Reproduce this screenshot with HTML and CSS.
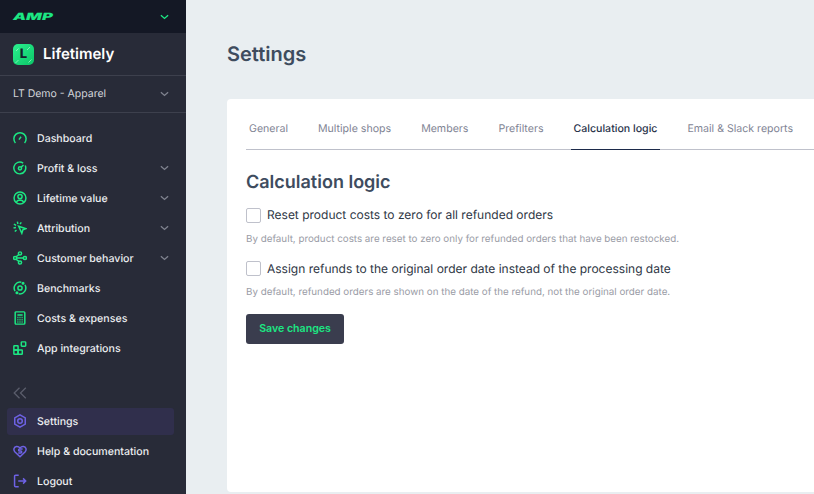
FILE: index.html
```html
<!DOCTYPE html>
<html lang="en">
<head>
    <meta charset="UTF-8">
    <meta name="viewport" content="width=device-width, initial-scale=1.0">
    <title>Lifetimely - Settings</title>
    <link rel="stylesheet" href="styles.css">
</head>
<body>
    <div class="app">
        <aside class="sidebar">
            <div class="topbar">
                <span class="amp-logo">AMP</span>
                <svg class="chev chev-green" viewBox="0 0 10 6"><path d="M1 1l4 3.600L9 1"/></svg>
            </div>
            <div class="brand">
                <span class="brand-mark">L
                    <svg class="brand-shine" viewBox="0 0 21 21"><path d="M14 6l3-3M2.500 19l3-3M15.500 18.500l3-3M3 7l2.500-2.500"/></svg>
                </span>
                <span class="brand-name">Lifetimely</span>
            </div>
            <div class="shop-select">
                <span>LT Demo - Apparel</span>
                <svg class="chev" viewBox="0 0 10 6"><path d="M1 1l4 3.600L9 1"/></svg>
            </div>

            <nav class="nav">
                <a class="nav-item">
                    <svg class="icon" viewBox="0 0 16 16"><path d="M2.800 13.600A7 7 0 1 1 13.200 13.600"/><path d="M6.800 9.800l2.400-3.200"/></svg>
                    <span>Dashboard</span>
                </a>
                <a class="nav-item">
                    <svg class="icon" viewBox="0 0 16 16"><path d="M11.600 2.300A6.800 6.800 0 1 0 14 5.200"/><circle cx="8" cy="8.400" r="1.800"/><path d="M9.400 7l2.600-2.400"/></svg>
                    <span>Profit &amp; loss</span>
                    <svg class="chev" viewBox="0 0 10 6"><path d="M1 1l4 3.600L9 1"/></svg>
                </a>
                <a class="nav-item">
                    <svg class="icon" viewBox="0 0 16 16"><circle cx="8" cy="8" r="6.800"/><circle cx="8" cy="6.400" r="2.400"/><path d="M3.900 13.200c.4-1.800 1.700-2.700 3-2.700h2.200c1.300 0 2.600.9 3 2.700"/></svg>
                    <span>Lifetime value</span>
                    <svg class="chev" viewBox="0 0 10 6"><path d="M1 1l4 3.600L9 1"/></svg>
                </a>
                <a class="nav-item">
                    <svg class="icon" viewBox="0 0 16 16"><path d="M6.500 6l8 2.800-3.200 1.300-1.200 3.900z"/><path d="M1 3.600l2.600 1.400M5 .8l.6 2.600M.6 8l2.800-.6M9.500 1.600L8 3.600M2 12l2-1.600"/></svg>
                    <span>Attribution</span>
                    <svg class="chev" viewBox="0 0 10 6"><path d="M1 1l4 3.600L9 1"/></svg>
                </a>
                <a class="nav-item">
                    <svg class="icon" viewBox="0 0 16 16"><circle cx="8" cy="2.800" r="1.800"/><circle cx="2.400" cy="8" r="1.800"/><circle cx="13.600" cy="8" r="1.800"/><circle cx="8" cy="13.200" r="1.800"/><path d="M4.200 8h7.600M6.700 4.200L3.600 6.600M3.600 9.400l3 2.500"/></svg>
                    <span>Customer behavior</span>
                    <svg class="chev" viewBox="0 0 10 6"><path d="M1 1l4 3.600L9 1"/></svg>
                </a>
                <a class="nav-item">
                    <svg class="icon" viewBox="0 0 16 16"><circle cx="8" cy="8" r="2.400"/><path d="M2.300 11.500A6.800 6.800 0 0 1 9.500 1.400M13.700 4.500A6.800 6.800 0 0 1 6.500 14.600"/><circle cx="11.500" cy="2.600" r=".9"/><circle cx="4.500" cy="13.400" r=".9"/></svg>
                    <span>Benchmarks</span>
                </a>
                <a class="nav-item">
                    <svg class="icon" viewBox="0 0 16 16"><rect x="2.500" y="1" width="11" height="14" rx="1"/><path d="M5 4.500h6M5 7.500h1.200M7.400 7.500h1.200M9.800 7.500H11M5 10h1.200M7.400 10h1.200M9.800 10H11M5 12.500h1.200M7.400 12.500h1.200M9.800 12.500H11"/></svg>
                    <span>Costs &amp; expenses</span>
                </a>
                <a class="nav-item">
                    <svg class="icon" viewBox="0 0 16 16"><rect x="1" y="5.500" width="4.800" height="4.800" rx=".6"/><rect x="1" y="10.300" width="4.800" height="4.800" rx=".6"/><rect x="5.800" y="10.300" width="4.800" height="4.800" rx=".6"/><rect x="9.500" y="1" width="5" height="5" rx=".8"/></svg>
                    <span>App integrations</span>
                </a>
            </nav>

            <div class="collapse">
                <svg viewBox="0 0 14 12"><path d="M6.500 .8L1.200 6l5.300 5.200M12.800 .8L7.500 6l5.300 5.200"/></svg>
            </div>

            <nav class="nav nav-bottom">
                <a class="nav-item active">
                    <svg class="icon icon-purple" viewBox="0 0 16 16"><path d="M8 1l6 3.400v7.200L8 15l-6-3.400V4.400z"/><circle cx="8" cy="8" r="2.600"/></svg>
                    <span>Settings</span>
                </a>
                <a class="nav-item">
                    <svg class="icon icon-purple" viewBox="0 0 16 16"><path d="M8 14.500L2 8.800C.2 6.800 1 3.200 4 2.800c1.600-.2 3 .5 4 1.700 1-1.200 2.400-1.900 4-1.700 3 .4 3.800 4 2 6z"/><path d="M11 5.800H7.500c-1.400 0-1.500 2.200 0 2.200h1.400c1.400 0 1.400 2.200 0 2.200H6"/></svg>
                    <span>Help &amp; documentation</span>
                </a>
                <a class="nav-item">
                    <svg class="icon icon-purple" viewBox="0 0 16 16"><path d="M6.500 1.500H3c-.8 0-1.200.5-1.200 1.200v10.600c0 .7.400 1.200 1.200 1.200h3.500"/><path d="M6 8h8.500M11.500 5l3 3-3 3"/></svg>
                    <span>Logout</span>
                </a>
            </nav>
        </aside>

        <main class="main">
            <h1 class="page-title">Settings</h1>
            <section class="card">
                <div class="tabs">
                    <a class="tab">General</a>
                    <a class="tab">Multiple shops</a>
                    <a class="tab">Members</a>
                    <a class="tab">Prefilters</a>
                    <a class="tab tab-active">Calculation logic</a>
                    <a class="tab">Email &amp; Slack reports</a>
                </div>
                <h2 class="section-title">Calculation logic</h2>
                <label class="check-row">
                    <span class="checkbox"></span>
                    <span>Reset product costs to zero for all refunded orders</span>
                </label>
                <p class="hint">By default, product costs are reset to zero only for refunded orders that have been restocked.</p>
                <label class="check-row">
                    <span class="checkbox"></span>
                    <span>Assign refunds to the original order date instead of the processing date</span>
                </label>
                <p class="hint">By default, refunded orders are shown on the date of the refund, not the original order date.</p>
                <button class="save-btn">Save changes</button>
            </section>
        </main>
    </div>
</body>
</html>
```

FILE: styles.css
```css
html, body {
    margin: 0;
    padding: 0;
    height: 100%;
    overflow: hidden;
    font-family: 'Inter', 'Liberation Sans', sans-serif;
    text-rendering: geometricPrecision;
    background-color: #e9eef1;
}

.app {
    display: flex;
    height: 494px;
    overflow: hidden;
}

/* sidebar */
.sidebar {
    width: 186px;
    flex-shrink: 0;
    background-color: #282b38;
    color: #f1f2f4;
}

.topbar {
    height: 33px;
    background-color: #141825;
    display: flex;
    align-items: center;
    justify-content: space-between;
    padding: 0 17px 0 13px;
    box-sizing: border-box;
}

.amp-logo {
    font-size: 10px;
    font-weight: 900;
    font-style: italic;
    line-height: 1;
    color: #1ce783;
    transform: scaleX(1.65);
    transform-origin: left center;
}

.chev {
    width: 9px;
    height: 6px;
    fill: none;
    stroke: #7f828e;
    stroke-width: 1.5;
    flex-shrink: 0;
}

.chev-green {
    stroke: #1ce783;
}

.brand {
    height: 43px;
    display: flex;
    align-items: center;
    gap: 9px;
    padding: 0 13px;
    box-sizing: border-box;
    border-bottom: 1px solid #3d404d;
}

.brand-mark {
    position: relative;
    width: 21px;
    height: 21px;
    border-radius: 5px;
    background: linear-gradient(135deg, #2bf08f 0%, #0bc567 100%);
    color: #14202a;
    font-size: 13px;
    font-weight: 800;
    display: flex;
    align-items: center;
    justify-content: center;
}

.brand-shine {
    position: absolute;
    top: 0;
    left: 0;
    width: 21px;
    height: 21px;
    fill: none;
    stroke: #a6f8cf;
    stroke-width: 1;
    stroke-opacity: 0.7;
}

.brand-name {
    padding-bottom: 1px;
    font-size: 15px;
    font-weight: 600;
    color: #fff;
}

.shop-select {
    height: 37px;
    display: flex;
    align-items: center;
    justify-content: space-between;
    padding: 0 17px 1px 13px;
    box-sizing: border-box;
    border-bottom: 1px solid #3d404d;
    font-size: 10.5px;
    color: #d3d5da;
}

.nav {
    display: flex;
    flex-direction: column;
    padding-top: 10px;
}

.nav-item {
    height: 30px;
    display: flex;
    align-items: center;
    gap: 10px;
    padding: 0 17px 0 13px;
    box-sizing: border-box;
    font-size: 10.6px;
    font-weight: 500;
    color: #eceef0;
}

.nav-item span {
    flex: 1;
}

.icon {
    width: 14px;
    height: 14px;
    fill: none;
    stroke: #1ce783;
    stroke-width: 1.7;
    flex-shrink: 0;
}

.icon-purple {
    stroke: #6e62e5;
}

.collapse {
    padding: 24px 0 0 13px;
    height: 21px;
}

.collapse svg {
    display: block;
    width: 14px;
    height: 12px;
    fill: none;
    stroke: #5a5d6b;
    stroke-width: 1.3;
}

.nav-bottom {
    padding-top: 0;
}

.nav-item.active {
    background-color: #302f4c;
    border-radius: 3px;
    margin: 0 12px 1px 7px;
    padding: 0 0 1px 6px;
    height: 27px;
}

/* main area */
.main {
    flex: 1;
    min-width: 0;
    padding-left: 41px;
}

.page-title {
    margin: 0;
    padding-top: 42px;
    height: 57px;
    font-size: 20px;
    line-height: 24px;
    font-weight: 600;
    color: #3e4c5e;
}

.card {
    width: 640px;
    height: 393px;
    box-sizing: border-box;
    background-color: #fff;
    border-radius: 4px;
    padding: 14px 0 0 19px;
}

.tabs {
    display: flex;
    gap: 24px;
    height: 36px;
    border-bottom: 1px solid #bfc1cb;
}

.tab {
    padding: 9px 3px 0;
    height: 27px;
    font-size: 10.6px;
    line-height: 14px;
    color: #7f8494;
}

.tab-active {
    color: #28334a;
    font-weight: 500;
    border-bottom: 1px solid #1c2a4a;
}

.section-title {
    margin: 22px 0 0;
    font-size: 18px;
    line-height: 22px;
    font-weight: 600;
    color: #3e4c5e;
}

.check-row {
    display: flex;
    align-items: center;
    gap: 6px;
    margin-top: 13px;
    font-size: 12px;
    line-height: 16px;
    color: #2e3644;
}

.checkbox {
    width: 13px;
    height: 13px;
    border: 1px solid #bfc1cb;
    border-radius: 2px;
    background-color: #fff;
}

.hint {
    margin: 10.5px 0 0;
    font-size: 9.8px;
    line-height: 12px;
    color: #9a9ca6;
}

.hint + .check-row {
    margin-top: 15px;
}

.save-btn {
    display: block;
    width: 98px;
    height: 30px;
    margin-top: 15px;
    padding: 0 0 1px;
    border: none;
    border-radius: 3px;
    background-color: #3a3d4e;
    color: #1ce783;
    font-family: inherit;
    font-size: 10.6px;
    font-weight: 600;
}
```
